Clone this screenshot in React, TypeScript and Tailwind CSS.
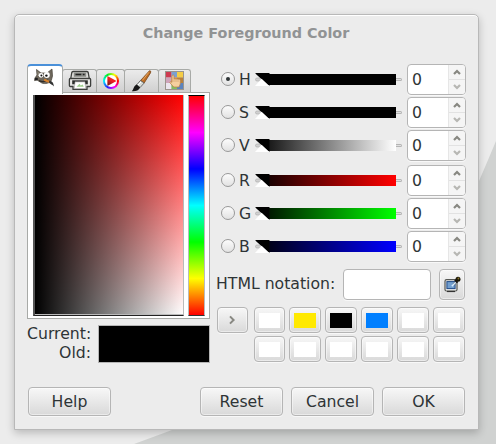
import React from "react";

const button =
  "flex shrink-0 items-center justify-center rounded-[4px] border border-[#b5b5b5] bg-[linear-gradient(#f7f7f7,#d9d9d9)] shadow-[inset_0_0_0_1px_rgba(255,255,255,0.45),0_1px_0_#f8f8f8]";

const channels = [
  { name: "H", end: "bg-black", gap: "mt-0" },
  { name: "S", end: "bg-black", gap: "mt-[2px]" },
  { name: "V", end: "bg-[linear-gradient(to_right,#000,#fff)]", gap: "mt-[2px]" },
  { name: "R", end: "bg-[linear-gradient(to_right,#000,#f00)]", gap: "mt-[4px]" },
  { name: "G", end: "bg-[linear-gradient(to_right,#000,#0f0)]", gap: "mt-[2px]" },
  { name: "B", end: "bg-[linear-gradient(to_right,#000,#00f)]", gap: "mt-[2px]" },
];

const history = [
  "bg-white", "bg-[#ffe900]", "bg-black", "bg-[#007fff]", "bg-white", "bg-white",
  "bg-white", "bg-white", "bg-white", "bg-white", "bg-white", "bg-white",
];

function Wilber() {
  return (
    <svg width="22" height="20" viewBox="0 0 22 20">
      <path d="M3 7 2.5 1.5 7 5h6l5-4 .5 7-1.2 4.5c-2 3-6 3.7-9.5 2.5L3 12 .5 12.6.8 10.2Z" fill="#6d675c" stroke="#474238" strokeWidth=".7" />
      <path d="m3.4 3 2.8 3.5-2.4 2Z" fill="#948d7e" />
      <circle cx="7" cy="7.3" r="2.4" fill="#fff" />
      <circle cx="12.8" cy="7" r="3" fill="#fff" />
      <circle cx="7.4" cy="7.6" r="1" fill="#111" />
      <circle cx="12.4" cy="7.6" r="1.2" fill="#111" />
      <path d="M1 10.2c1.2-.9 3-.3 3 .8 0 1.2-2.3 1.8-3.1.8Z" fill="#222" />
      <path d="M5 12.6c3 1.5 6 1.2 9-.6" fill="none" stroke="#302c27" strokeWidth="1.3" />
      <path d="m10.2 11.8 6 2.4" stroke="#d7812c" strokeWidth="2.2" />
      <path d="M15.5 12.7c3 .2 4.3 2.8 4.4 5.9-1.3-2-3.7-2.1-5.2-4.3Z" fill="#333" />
    </svg>
  );
}

function Printer() {
  return (
    <svg className="-mt-px" width="24" height="21" viewBox="0 0 24 21">
      <path d="M5 1.5h14q1 0 1.2 1L21.5 10h-19l1.3-7.5q.2-1 1.2-1Z" fill="#dcdcda" stroke="#3c3e3c" strokeWidth="1.3" />
      <path d="M5.8 2.6h12.4v4.2H5.8Z" fill="#8a8c88" />
      <path d="M7.5 4.6h5.8m1.5 0h1.8" stroke="#222" strokeWidth="1.5" />
      <path d="M2.3 8.5h19.4q.9 0 .9 1v6q0 1-1 1H19v2.8H5v-2.8H2.4q-1 0-1-1v-6q0-1 .9-1Z" fill="#e9e9e7" stroke="#3c3e3c" strokeWidth="1.3" />
      <path d="M4.2 10.3h15.6v4H4.2Z" fill="#2c2e2c" />
      <path d="M7 11.8h10l.7 6.8H6.3Z" fill="#fff" stroke="#888" strokeWidth=".5" />
      <path d="m8.5 16.8 3-3 1.2 1.6 2-.8 1 2.2Z" fill="#a0d08f" />
    </svg>
  );
}

function Wheel() {
  return (
    <span className="mb-px flex h-[16px] w-[16px] items-center justify-center rounded-full bg-[conic-gradient(from_90deg,#f00,#f0f,#22f,#0ef,#0e2,#ff0,#f00)]">
      <span className="flex h-[12px] w-[12px] items-center justify-center rounded-full bg-white">
        <svg width="12" height="12" viewBox="0 0 12 12">
          <defs>
            <linearGradient id="hueTriangle" x1="0" y1="1" x2=".6" y2="0">
              <stop stopColor="#5a1a1a" />
              <stop offset=".6" stopColor="#f02020" />
            </linearGradient>
          </defs>
          <path d="m2.4 1 9.2 5-9.2 5Z" fill="url(#hueTriangle)" />
        </svg>
      </span>
    </span>
  );
}

function Brush() {
  return (
    <svg className="-mt-px" width="21" height="22" viewBox="0 0 21 22">
      <path d="M18.5.7q2 0 1 2.2L13 13.2l-3.6-2.5Z" fill="#bd6d24" stroke="#7a4a1f" strokeWidth=".8" />
      <path d="m17.8 2.4-6.4 8" stroke="#e9a55e" />
      <path d="m9.5 10.4 3.6 2.7-4 4.4-3.5-2.6Z" fill="#d8dcd8" stroke="#555" strokeWidth=".8" />
      <path d="m10 12-3 3" stroke="#fff" />
      <path d="m5.5 14.6 3.7 3C7.5 20.8 4.7 21.6.8 21.3c1.9-1.5 1.8-5.3 4.7-6.7Z" fill="#171717" />
    </svg>
  );
}

function Palette() {
  return (
    <svg className="-mt-px" width="19" height="19" viewBox="0 0 19 19">
      <rect x=".5" y=".5" width="18" height="18" fill="#c9c4be" stroke="#9b948c" />
      <path d="M1 1h5.5v5.5H1Z" fill="#cf3a50" />
      <path d="M6.5 1H12v5.5H6.5Z" fill="#7ba0d0" />
      <path d="M12 1h6v5.5h-6Z" fill="#f5cd45" />
      <path d="M1 6.5h5.5V12H1Z" fill="#cfa4bb" />
      <path d="M6.5 6.5H12V12H6.5Z" fill="#e08a38" />
      <path d="M12 6.5h6V12h-6Z" fill="#b9803a" />
      <path d="M1 12h5.5v6H1Z" fill="#ebe6ee" />
      <path d="M6.5 12H12v6H6.5Z" fill="#85bd60" />
      <path d="M12 12h6v6h-6Z" fill="#5b83be" />
      <path d="M7 4.5q1.2-1.2 2 0V8q1-.8 2 .1 1-.8 2 .2 2-.7 2.3 1v3.5L14 16H8.8l-4-4.3q0-1.6 2.2-.5Z" fill="#f5cf9e" stroke="#b98148" strokeWidth=".7" />
      <path d="M9 8v3m2-3v3m2-2.5V11" stroke="#c99761" strokeWidth=".6" />
    </svg>
  );
}

function ScreenPicker() {
  return (
    <svg width="17" height="17" viewBox="0 0 17 17">
      <rect x="1" y="3.7" width="12" height="11.3" rx="1.5" fill="#eeeeec" stroke="#555753" strokeWidth="1.2" />
      <path d="M3 15.5h8" stroke="#333" strokeWidth="1.2" />
      <rect x="2.9" y="5.6" width="8.2" height="7" fill="#729fcf" stroke="#204a87" />
      <path d="m9.3 8.7 3.2-3.2" stroke="#555" strokeWidth="2" />
      <path d="m7.8 10.2 4-4" stroke="#d7edff" strokeWidth="1.5" />
      <path d="m10.8 3.8 2.8 2.8" stroke="#111" strokeWidth="1.8" />
      <circle cx="14" cy="3.2" r="2.5" fill="#1b1708" />
      <circle cx="14.4" cy="2.5" r=".9" fill="#887426" />
    </svg>
  );
}

function Chevron({ up = false }: { up?: boolean }) {
  return (
    <svg width="8" height="6" viewBox="0 0 8 6">
      <path d={up ? "M1 5 4 2l3 3" : "m1 1 3 3 3-3"} fill="none" stroke={up ? "#888882" : "#b7b7b3"} strokeWidth="2.2" />
    </svg>
  );
}

function Tab({ width, children }: { width: string; children: React.ReactNode }) {
  return (
    <div className={`mt-[5px] flex h-[23px] shrink-0 items-center justify-center rounded-t-[3px] border border-b-0 border-[#a8aaa7] bg-[linear-gradient(#ebebeb,#d0d0d0)] ${width}`}>
      {children}
    </div>
  );
}

function ChannelRow({ name, end, gap }: { name: string; end: string; gap: string }) {
  return (
    <div className={`flex h-[31px] items-center ${gap}`}>
      <span className="mb-px ml-[4px] flex h-[14px] w-[14px] shrink-0 items-center justify-center rounded-full border border-[#999] bg-[linear-gradient(#fcfcfc,#e2e2e2)]">
        {name === "H" && <span className="h-[4px] w-[4px] rounded-full bg-[#2e3436]" />}
      </span>
      <span className="ml-[4px] w-[16px] shrink-0 leading-[20px]">{name}</span>
      <span className="relative h-[11px] w-[141px] shrink-0">
        <span className={`block h-full ${end}`} />
        <svg className="absolute left-0 -top-px" width="15" height="13" viewBox="0 -1 15 13">
          <path d="M0 -1v13h14Z" fill="#ececec" />
          <rect x=".5" y="4" width="6" height="3" rx="1.5" fill="#d0d0d0" stroke="#aaa" strokeWidth=".6" />
          <path d="M0-1h14.5V12Z" fill="#000" />
          <path d="M6.6 4.8 14.3 12H0Z" fill="#fff" />
        </svg>
      </span>
      <span className="h-[3px] w-[6px] shrink-0 rounded-r-[2px] border border-l-0 border-[#b5b5b5] bg-[#e0e0e0]" />
      <span className="ml-[5px] flex h-[31px] w-[59px] shrink-0 overflow-hidden rounded-[4px] border border-[#b5b5b5] bg-white shadow-[0_1px_0_#f8f8f8]">
        <span className="w-[40px] pl-[4px] leading-[30px]">0</span>
        <span className="flex flex-1 flex-col border-l border-[#e6e6e6] bg-[#f5f5f5]">
          <span className="flex h-[16px] items-center justify-center border-b border-[#e2e2e2]"><Chevron up /></span>
          <span className="flex h-[14px] items-center justify-center"><Chevron /></span>
        </span>
      </span>
    </div>
  );
}

export default function App() {
  return (
    <main className="relative h-[444px] w-[496px] overflow-hidden bg-[#ececec] font-['DejaVu_Sans',sans-serif] text-[15.7px] text-[#2e3436]">
      <svg className="absolute inset-0" width="496" height="444">
        <path d="M134 444 172 430Q350 365 479 181L488 160 496 141v303Z" fill="#d0d2d1" />
      </svg>
      <section className="relative ml-[14px] mt-[14px] flex h-[416px] w-[465px] flex-col rounded-t-[5px] border border-[#b8b8b8] bg-[#ececec] pl-[12px] shadow-[inset_0_1px_0_#fff,0_3px_8px_rgba(0,0,0,0.22)]">
        <h1 className="mt-[8px] h-[20px] pr-[13px] text-center text-[14.35px] font-bold leading-[20px] text-[#919394]">Change Foreground Color</h1>

        <div className="mt-[21px] flex h-[299px]">
          <div className="w-[183px] shrink-0">
            <div className="relative z-10 flex h-[28px]">
              <div className="flex h-[30px] w-[36px] shrink-0 items-center justify-center rounded-t-[4px] border border-b-0 border-t-2 border-[#a8aaa7] border-t-[#4a90d9] bg-white pb-[4px]"><Wilber /></div>
              <Tab width="-ml-px w-[35px]"><Printer /></Tab>
              <Tab width="-ml-px w-[29px]"><Wheel /></Tab>
              <Tab width="-ml-px w-[35px]"><Brush /></Tab>
              <Tab width="-ml-px w-[33px]"><Palette /></Tab>
            </div>
            <div className="flex h-[227px] border border-[#a8aaa7] bg-white pl-[5px] pt-[2px]">
              <div className="h-[221px] w-[151px] border-b border-l-2 border-r border-b-[#222] border-l-[#555] border-r-[#bbb] bg-[linear-gradient(#f00,#fff)]">
                <div className="h-full border-b border-[#bbb] bg-[linear-gradient(to_right,#000,rgba(0,0,0,0))]" />
              </div>
              <div className="ml-[4px] h-[221px] w-[17px] border-x border-x-[#bbb] border-b border-t border-b-[#333] border-t-black bg-[linear-gradient(to_bottom,#f00,#f0f_16.7%,#00f_33.3%,#0ff_50%,#0f0_66.7%,#ff0_83.3%,#f00)]" />
            </div>
            <div className="mt-[6px] flex h-[38px]">
              <div className="-mt-px w-[64px] shrink-0 text-right leading-[19px]">
                <p>Current:</p>
                <p>Old:</p>
              </div>
              <div className="ml-[7px] h-[38px] w-[112px] border border-[#b5b5b5] bg-black" />
            </div>
          </div>

          <div className="ml-[7px] w-[249px] shrink-0">
            {channels.map((channel) => <ChannelRow key={channel.name} {...channel} />)}
            <div className="mt-[7px] flex h-[31px]">
              <span className="-ml-px w-[127px] shrink-0 whitespace-nowrap leading-[30px]">HTML notation:</span>
              <span className="h-[31px] w-[88px] shrink-0 rounded-[4px] border border-[#b5b5b5] bg-white shadow-[0_1px_0_#f8f8f8]" />
              <span className={`ml-[8px] h-[31px] w-[26px] ${button}`}><ScreenPicker /></span>
            </div>
            <div className="mt-[7px] flex items-start">
              <span className={`h-[26px] w-[31px] ${button}`}>
                <svg className="-ml-[2px] -mt-px" width="8" height="10" viewBox="0 0 8 10"><path d="m2 1.4 3.6 3.6L2 8.6" fill="none" stroke="#888882" strokeWidth="2" /></svg>
              </span>
              <div className="ml-[6px] grid grid-cols-[31px_32px_32px_32px_32px_32px] gap-x-[4px] gap-y-[3px]">
                {history.map((color, index) => (
                  <span key={index} className={`h-[26px] px-[4px] ${button}`}><span className={`h-[15px] w-full ${color}`} /></span>
                ))}
              </div>
            </div>
          </div>
        </div>

        <footer className="mt-[24px] flex h-[29px] pl-px">
          <button className={`w-[83px] ${button}`}>Help</button>
          <button className={`ml-[89px] w-[83px] ${button}`}>Reset</button>
          <button className={`ml-[8px] w-[83px] ${button}`}>Cancel</button>
          <button className={`ml-[8px] w-[83px] ${button}`}>OK</button>
        </footer>
      </section>
    </main>
  );
}
